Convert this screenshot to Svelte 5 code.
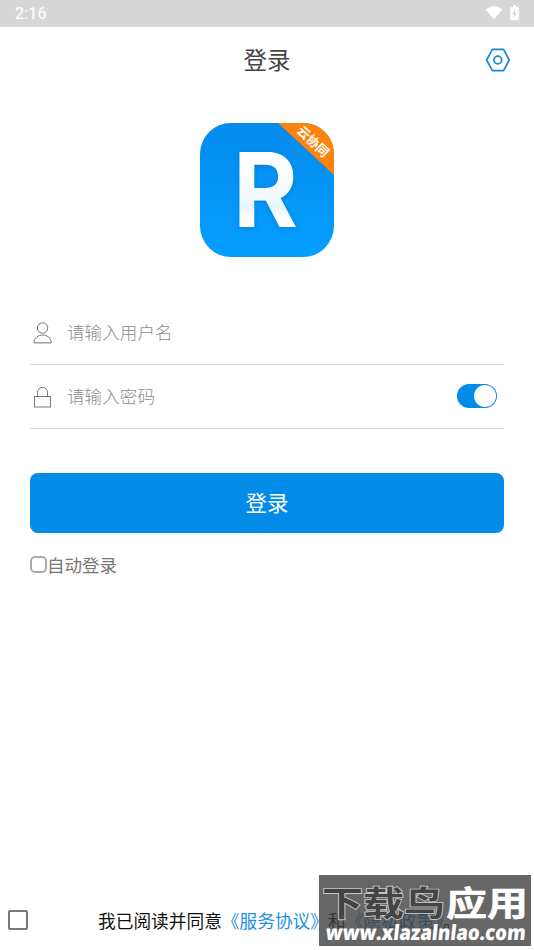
<script lang="ts">
  let username = '';
  let password = '';
  let showPassword = true;
  let autoLogin = false;
  let agreed = false;
</script>

<div class="screen">
  <div class="status-bar">
    <span class="time">2:16</span>
    <div class="status-icons">
      <svg width="18" height="14" viewBox="0 0 18 14">
        <path d="M0.5 3.2 Q9 -2.8 17.5 3.2 L9 13.6 Z" fill="#fff" />
      </svg>
      <svg width="9" height="16" viewBox="0 0 9 16">
        <path d="M3 0.3h3v1.6h1.8q1 0 1 1v11.4q0 1-1 1H1.2q-1 0-1-1V2.9q0-1 1-1H3z" fill="#fff" />
        <path d="M5 4.2 2.2 9h1.9v4L6.8 8H5z" fill="#d7d7d7" />
      </svg>
    </div>
  </div>

  <header class="title-bar">
    <h1>登录</h1>
    <button class="settings" aria-label="设置">
      <svg width="26" height="24" viewBox="0 0 26 24" fill="none" stroke="#1787d8" stroke-width="1.7">
        <path d="M7.4 1.4h11.2L24.2 12l-5.6 10.6H7.4L1.6 12z" stroke-linejoin="round" />
        <circle cx="12.8" cy="12" r="3.9" />
      </svg>
    </button>
  </header>

  <div class="logo">
    <svg width="134" height="134" viewBox="0 0 134 134">
      <defs>
        <linearGradient id="tile" x1="0" y1="0" x2="0" y2="1">
          <stop offset="0" stop-color="#058bec" />
          <stop offset="1" stop-color="#049fff" />
        </linearGradient>
        <linearGradient id="letter" x1="0" y1="0" x2="0" y2="1">
          <stop offset="0.3" stop-color="#fff" />
          <stop offset="0.58" stop-color="#f2f8ff" />
          <stop offset="0.64" stop-color="#e6f2ff" />
          <stop offset="0.72" stop-color="#fff" />
        </linearGradient>
        <clipPath id="rounded">
          <rect width="134" height="134" rx="31" />
        </clipPath>
      </defs>
      <g clip-path="url(#rounded)">
        <rect width="134" height="134" fill="url(#tile)" />
        <path d="M78 0H134V52Z" fill="#ff820b" />
      </g>
      <text class="ribbon" transform="translate(113 18.5) rotate(43)" text-anchor="middle" y="4.5">云协同</text>
      <text class="letter" transform="translate(33 104) scale(0.96 1)" fill="url(#letter)">R</text>
    </svg>
  </div>

  <form class="login-form">
    <label class="field">
      <svg width="20" height="22" viewBox="0 0 20 22" fill="none" stroke="#777" stroke-width="1">
        <circle cx="9.6" cy="6" r="5.2" />
        <path d="M1 20.9C1 10.4 18.2 10.4 18.2 20.9Z" />
      </svg>
      <input type="text" placeholder="请输入用户名" bind:value={username} />
    </label>
    <label class="field">
      <svg width="20" height="22" viewBox="0 0 20 22" fill="none" stroke="#777" stroke-width="1">
        <rect x="1.5" y="9.5" width="16" height="10.5" />
        <path d="M4.5 9.5V5.3a5 5 0 0 1 10 0v4.2" />
      </svg>
      <input type="text" placeholder="请输入密码" bind:value={password} />
      <button
        type="button"
        class="toggle"
        class:on={showPassword}
        aria-label="显示密码"
        on:click={() => (showPassword = !showPassword)}
      ></button>
    </label>

    <button type="button" class="submit">登录</button>

    <label class="auto-login">
      <input type="checkbox" bind:checked={autoLogin} />
      <span>自动登录</span>
    </label>
  </form>

  <footer class="agreement">
    <input type="checkbox" aria-label="同意" bind:checked={agreed} />
    <p>我已阅读并同意<span class="link">《服务协议》</span>和<span class="link">《隐私政策》</span>。</p>
  </footer>

  <div class="watermark">
    <svg width="212" height="71" viewBox="0 0 212 71">
      <g class="site-name" transform="translate(3 41) scale(1 0.82)">
        <text class="dark" textLength="123" lengthAdjust="spacingAndGlyphs">下载鸟</text>
        <text class="light" x="124" textLength="82" lengthAdjust="spacingAndGlyphs">应用</text>
      </g>
      <text class="site-url" transform="translate(6 64.5) skewX(-6)" textLength="200" lengthAdjust="spacingAndGlyphs">www.xlazalnlao.com</text>
    </svg>
  </div>
</div>

<style>
  :global(body) {
    background: #fff;
  }

  .screen {
    position: relative;
    display: flex;
    flex-direction: column;
    width: 534px;
    height: 950px;
    overflow: hidden;
    background: #fff;
    font-family: 'Noto Sans CJK SC', sans-serif;
  }

  .status-bar {
    display: flex;
    align-items: center;
    justify-content: space-between;
    box-sizing: border-box;
    height: 27px;
    padding: 0 15px;
    background: #d7d7d7;
  }

  .time {
    color: #fff;
    font-family: Roboto, sans-serif;
    font-size: 16px;
    font-weight: 400;
    letter-spacing: 0.2px;
  }

  .status-icons {
    display: flex;
    align-items: center;
    gap: 7px;
    padding-bottom: 1px;
  }

  .title-bar {
    display: grid;
    grid-template-columns: 1fr auto 1fr;
    align-items: center;
    height: 66px;
    padding: 0 23px;
  }

  h1 {
    grid-column: 2;
    margin: 0;
    padding-bottom: 3px;
    color: #444;
    font-size: 23.5px;
    font-weight: 400;
    line-height: 34px;
  }

  .settings {
    display: flex;
    justify-self: end;
    padding: 0;
    border: none;
    background: none;
    cursor: pointer;
  }

  .logo {
    display: flex;
    justify-content: center;
    margin-top: 30px;
  }

  .logo svg,
  .watermark svg {
    overflow: visible;
  }

  .ribbon {
    fill: #fff;
    font-size: 12.8px;
    font-weight: 700;
  }

  .letter {
    font-family: Inter, sans-serif;
    font-size: 103px;
    font-weight: 700;
    filter: drop-shadow(0 1px 2px rgba(0, 70, 150, 0.3));
  }

  .login-form {
    display: flex;
    flex-direction: column;
    margin-top: 43px;
    padding: 0 30px;
  }

  .field {
    display: flex;
    align-items: center;
    box-sizing: border-box;
    height: 64px;
    padding: 2px 7px 0 3px;
    border-bottom: 1px solid #dcdcdc;
  }

  .field:first-child {
    height: 65px;
  }

  .field input {
    flex: 1;
    min-width: 0;
    margin-left: 14px;
    padding: 0 0 4px;
    border: none;
    outline: none;
    background: none;
    color: #444;
    font: inherit;
    font-size: 17.6px;
  }

  .field input::placeholder {
    color: #8c8c8c;
    font-weight: 300;
    opacity: 1;
  }

  .toggle {
    box-sizing: border-box;
    width: 40px;
    height: 24px;
    margin-bottom: 3px;
    padding: 1px;
    border: none;
    border-radius: 12px;
    background: #ccc;
    cursor: pointer;
  }

  .toggle::after {
    content: '';
    display: block;
    width: 22px;
    height: 22px;
    border-radius: 50%;
    background: #fff;
  }

  .toggle.on {
    background: #058be8;
  }

  .toggle.on::after {
    margin-left: auto;
  }

  .submit {
    height: 60px;
    margin-top: 44px;
    padding: 0 0 4px;
    border: none;
    border-radius: 8px;
    background: #038be8;
    color: #fff;
    font: inherit;
    font-size: 21.5px;
    cursor: pointer;
  }

  .auto-login {
    display: flex;
    align-items: center;
    align-self: flex-start;
    margin-top: 19px;
    color: #777;
    font-size: 17.5px;
    line-height: 26px;
  }

  .auto-login span {
    padding-bottom: 1px;
  }

  input[type='checkbox'] {
    appearance: none;
    box-sizing: border-box;
    flex: none;
    margin: 0;
    background: #fff;
  }

  .auto-login input {
    width: 17px;
    height: 17px;
    margin-bottom: 2px;
    border: 2.5px solid #aaa;
    border-radius: 5px;
  }

  .agreement {
    display: flex;
    align-items: center;
    height: 30px;
    margin-top: auto;
    padding: 0 0 15px 8px;
  }

  .agreement input {
    width: 20px;
    height: 20px;
    border: 2px solid #777;
    border-radius: 2px;
  }

  .agreement p {
    margin: 0 0 0 70px;
    color: #111;
    font-size: 17.7px;
    line-height: 26px;
    white-space: nowrap;
  }

  .link {
    color: #1f90e0;
  }

  .watermark {
    position: absolute;
    top: 875px;
    left: 319px;
    width: 212px;
    height: 71px;
    background: rgba(61, 61, 61, 0.79);
  }

  .site-name {
    font-size: 41px;
    font-weight: 700;
  }

  .dark {
    fill: #444;
    stroke: #c8c8c8;
    stroke-width: 2px;
    paint-order: stroke;
  }

  .light {
    fill: #fff;
    stroke: #fff;
    stroke-width: 0.6px;
  }

  .site-url {
    fill: #fff;
    font-family: 'Open Sans', sans-serif;
    font-size: 21px;
    font-weight: 800;
  }
</style>
